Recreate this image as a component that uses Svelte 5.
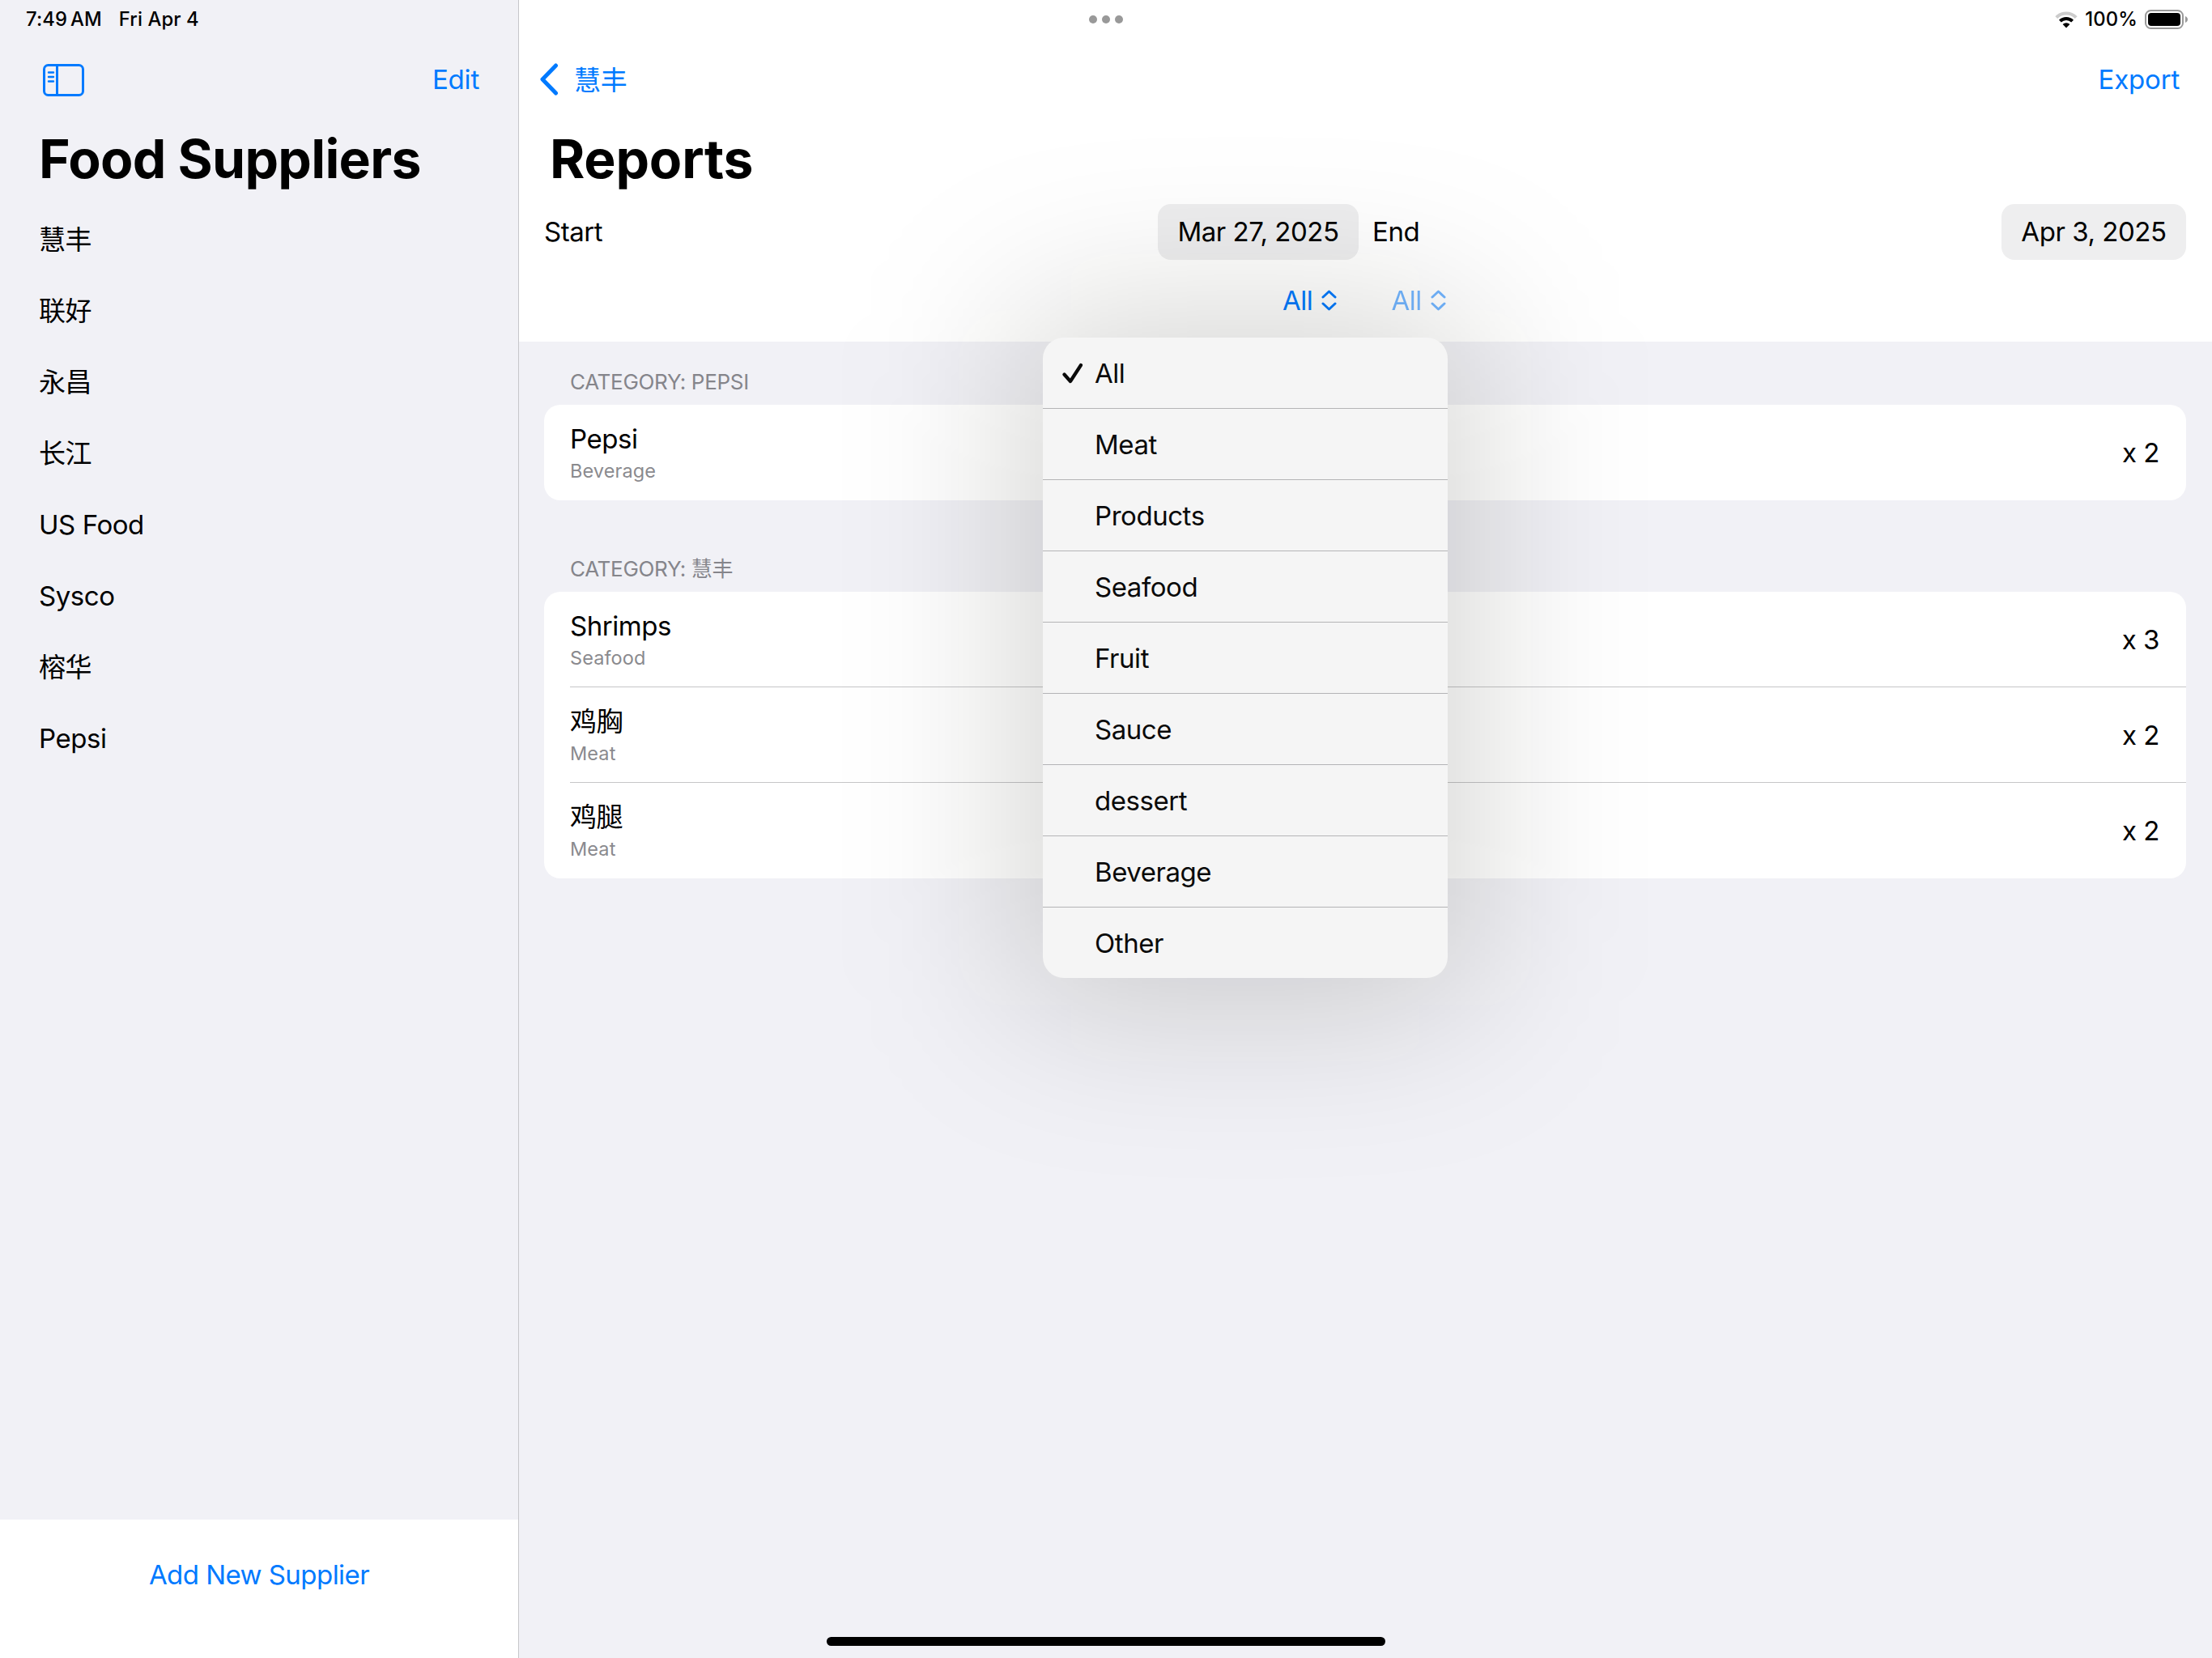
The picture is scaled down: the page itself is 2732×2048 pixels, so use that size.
<script lang="ts">
  interface ReportItem {
    name: string;
    category: string;
    count: number;
  }

  interface ReportSection {
    supplier: string;
    items: ReportItem[];
  }

  const suppliers = ["慧丰", "联好", "永昌", "长江", "US Food", "Sysco", "榕华", "Pepsi"];

  const categories = [
    "All",
    "Meat",
    "Products",
    "Seafood",
    "Fruit",
    "Sauce",
    "dessert",
    "Beverage",
    "Other",
  ];

  const sections: ReportSection[] = [
    {
      supplier: "Pepsi",
      items: [{ name: "Pepsi", category: "Beverage", count: 2 }],
    },
    {
      supplier: "慧丰",
      items: [
        { name: "Shrimps", category: "Seafood", count: 3 },
        { name: "鸡胸", category: "Meat", count: 2 },
        { name: "鸡腿", category: "Meat", count: 2 },
      ],
    },
  ];

  let selected = $state("All");
  let menuOpen = $state(true);

  function pick(category: string) {
    selected = category;
    menuOpen = false;
  }
</script>

{#snippet updown()}
  <svg class="updown" width="19" height="26" viewBox="0 0 19 26">
    <path d="M2 9 9.5 2 17 9M2 17l7.5 7 7.5-7" />
  </svg>
{/snippet}

<div class="screen">
  <aside class="sidebar">
    <div class="status">
      <span class="time">7:49<i></i>AM</span>
      <span class="date">Fri Apr 4</span>
    </div>

    <div class="toolbar">
      <button class="toggle" aria-label="Toggle sidebar">
        <svg width="51" height="40" viewBox="0 0 51 40">
          <rect x="1.5" y="1.5" width="48" height="37" rx="5" />
          <path d="M17.5 2v36" />
          <path class="lines" d="M7 10.500h6M7 16h6M7 21.500h6" />
        </svg>
      </button>
      <button>Edit</button>
    </div>

    <h1>Food Suppliers</h1>

    <ul class="suppliers">
      {#each suppliers as supplier}
        <li>{supplier}</li>
      {/each}
    </ul>

    <div class="sidebar-footer">
      <button>Add New Supplier</button>
    </div>
  </aside>

  <main class="detail">
    <header>
      <div class="status status-right">
        <svg class="wifi" width="28" height="21" viewBox="0 0 28 21">
          <path class="dim" d="M1.8 7.6a17.3 17.3 0 0 1 24.4 0" />
          <path d="M6.4 12.2a10.8 10.8 0 0 1 15.2 0" />
          <path class="fill" d="M14 20.4 9.6 16a6.3 6.3 0 0 1 8.8 0z" />
        </svg>
        <span>100%</span>
        <svg class="battery" width="54" height="24" viewBox="0 0 54 24">
          <rect class="shell" x="1" y="1" width="46" height="22" rx="6.5" />
          <rect x="4" y="4" width="40" height="16" rx="4" />
          <path class="nub" d="M50 8c4 1.500 4 6.500 0 8z" />
        </svg>
      </div>

      <div class="toolbar">
        <button class="back">
          <svg width="24" height="40" viewBox="0 0 24 40">
            <path d="M20.500 3 4 20l16.500 17" />
          </svg>
          <span>慧丰</span>
        </button>
        <button>Export</button>
      </div>

      <h1>Reports</h1>

      <div class="dates">
        <label class="date-field"><span>Start</span> <span class="pill start">Mar 27, 2025</span></label>
        <label class="date-field"><span>End</span> <span class="pill end">Apr 3, 2025</span></label>
      </div>

      <div class="filters">
        <button onclick={() => (menuOpen = !menuOpen)}>{selected}{@render updown()}</button>
        <button class="faded">All{@render updown()}</button>
      </div>
    </header>

    {#each sections as section}
      <section>
        <h2>Category: {section.supplier}</h2>
        <div class="card">
          {#each section.items as item}
            <div class="row">
              <div class="item">
                <div class="name">{item.name}</div>
                <div class="sub">{item.category}</div>
              </div>
              <span class="count">x {item.count}</span>
            </div>
          {/each}
        </div>
      </section>
    {/each}

    {#if menuOpen}
      <div class="popup">
        <div class="shadow"></div>
        <div class="menu">
          {#each categories as category}
            <button class="menu-item" onclick={() => pick(category)}>
              <span class="check">
                {#if category === selected}
                  <svg width="26" height="26" viewBox="0 0 26 26">
                    <path d="M2.500 14.500 10 23 23 3" />
                  </svg>
                {/if}
              </span>
              {category}
            </button>
          {/each}
        </div>
      </div>
    {/if}
  </main>

  <div class="dots"><i></i><i></i><i></i></div>
  <div class="home"></div>
</div>

<style>
  :global(body) {
    margin: 0;
  }

  .screen {
    position: relative;
    display: flex;
    width: 2732px;
    height: 2048px;
    overflow: hidden;
    background: #f1f1f6;
    color: #000;
    font-family: Inter, "Noto Sans CJK SC", sans-serif;
    font-size: 33px;
    line-height: 40px;
    letter-spacing: -0.45px;
  }

  button {
    padding: 0;
    border: none;
    background: none;
    color: #007aff;
    font: inherit;
    letter-spacing: inherit;
    cursor: pointer;
  }

  svg {
    display: block;
    fill: none;
    stroke: currentColor;
    stroke-linecap: round;
    stroke-linejoin: round;
  }

  h1 {
    margin: 0;
    font-size: 66px;
    font-weight: 700;
    line-height: 80px;
    letter-spacing: -0.7px;
  }

  .sidebar {
    display: flex;
    flex-direction: column;
    flex: none;
    width: 640px;
    border-right: 1px solid #c6c6ca;
  }

  .status {
    display: flex;
    align-items: center;
    height: 48px;
    padding-left: 32px;
    font-size: 23.8px;
    font-weight: 500;
    letter-spacing: 0.1px;
  }

  .time i {
    display: inline-block;
    width: 4px;
  }

  .date {
    margin-left: 21px;
  }

  .toolbar {
    display: flex;
    align-items: center;
    justify-content: space-between;
    height: 100px;
    padding: 0 48px 0 53px;
    letter-spacing: -0.2px;
  }

  .toolbar svg {
    stroke-width: 3;
  }

  .toolbar .lines {
    stroke-width: 2.4;
  }

  .toggle {
    padding-top: 1px;
  }

  .sidebar h1 {
    margin: 8px 0 0 48px;
  }

  .suppliers {
    flex: 1;
    margin: 16px 0 0;
    padding: 0;
    list-style: none;
  }

  .suppliers li {
    display: flex;
    align-items: center;
    height: 88px;
    padding-left: 48px;
  }

  .sidebar-footer {
    box-sizing: border-box;
    height: 171px;
    padding-top: 48px;
    background: #fff;
    letter-spacing: -0.55px;
    text-align: center;
  }

  .detail {
    position: relative;
    flex: 1;
    overflow: hidden;
  }

  header {
    height: 422px;
    background: #fff;
  }

  .status-right {
    justify-content: flex-end;
    padding: 0 29px 0 0;
  }

  .wifi {
    margin-right: 9px;
    stroke-width: 4;
  }

  .wifi path {
    stroke-linecap: butt;
  }

  .wifi .dim {
    stroke: #ccc;
  }

  .wifi .fill {
    fill: #000;
    stroke: none;
  }

  .battery {
    margin-left: 9px;
    fill: #000;
    stroke: none;
  }

  .battery .shell {
    fill: none;
    stroke: #999;
    stroke-width: 2;
  }

  .battery .nub {
    fill: #999;
  }

  header .toolbar {
    padding: 0 40px 0 25px;
  }

  .back {
    display: flex;
    align-items: center;
    gap: 19px;
  }

  .back span {
    padding-top: 1px;
  }

  .toolbar .back svg {
    stroke-width: 5;
  }

  header h1 {
    margin: 8px 0 0 38px;
    letter-spacing: -0.2px;
  }

  .dates {
    display: grid;
    grid-template-columns: 1006px 1005px;
    gap: 17px;
    margin: 16px 0 0 31px;
  }

  .date-field {
    display: flex;
    align-items: center;
    justify-content: space-between;
  }

  .date-field span:first-child {
    padding-bottom: 1px;
  }

  .pill {
    width: 248px;
    border-radius: 16px;
    background: #eeeeef;
    line-height: 69px;
    text-align: center;
  }

  .pill.end {
    width: 228px;
  }

  .filters {
    display: flex;
    gap: 67px;
    margin: 30px 0 0 943px;
  }

  .filters button {
    display: flex;
    align-items: center;
    gap: 11px;
  }

  .filters .faded {
    opacity: 0.55;
  }

  .updown {
    stroke-width: 3;
  }

  section {
    margin: 0 32px 35px 31px;
  }

  h2 {
    margin: 0;
    padding: 34px 0 12px 32px;
    color: #85858b;
    font-size: 26px;
    font-weight: 400;
    line-height: 32px;
    letter-spacing: -0.3px;
    text-transform: uppercase;
  }

  .card {
    border-radius: 20px;
    background: #fff;
  }

  .row {
    display: flex;
    align-items: center;
    justify-content: space-between;
    box-sizing: border-box;
    height: 118px;
    margin-left: 32px;
    padding-right: 33px;
    border-bottom: 1px solid #c6c6c8;
  }

  .row:last-child {
    border-bottom-color: transparent;
  }

  .item {
    padding-top: 2px;
  }

  .sub {
    margin-top: 4px;
    color: #8a8a8e;
    font-size: 23.5px;
    line-height: 32px;
    letter-spacing: 0.1px;
  }

  .popup {
    position: absolute;
    top: 417px;
    left: 647px;
    width: 500px;
  }

  .shadow {
    position: absolute;
    inset: -34px;
    border-radius: 60px;
    background: rgba(14, 14, 0, 0.17);
    filter: blur(104px);
    pointer-events: none;
  }

  .menu {
    position: relative;
    border-radius: 26px;
    background: #f5f5f5;
  }

  .menu-item {
    display: flex;
    align-items: center;
    box-sizing: border-box;
    width: 100%;
    height: 88px;
    border-bottom: 1px solid #b4b4b6;
    color: #0a0a0a;
  }

  .menu-item:last-child {
    height: 87px;
    border-bottom: none;
  }

  .check {
    width: 40px;
    padding-left: 24px;
  }

  .check svg {
    stroke-width: 4.2;
  }

  .dots {
    position: absolute;
    top: 19px;
    left: 1345px;
    display: flex;
    gap: 6px;
  }

  .dots i {
    width: 10px;
    height: 10px;
    border-radius: 50%;
    background: #999;
  }

  .home {
    position: absolute;
    bottom: 15px;
    left: 1021px;
    width: 690px;
    height: 11px;
    border-radius: 6px;
    background: #000;
  }
</style>
